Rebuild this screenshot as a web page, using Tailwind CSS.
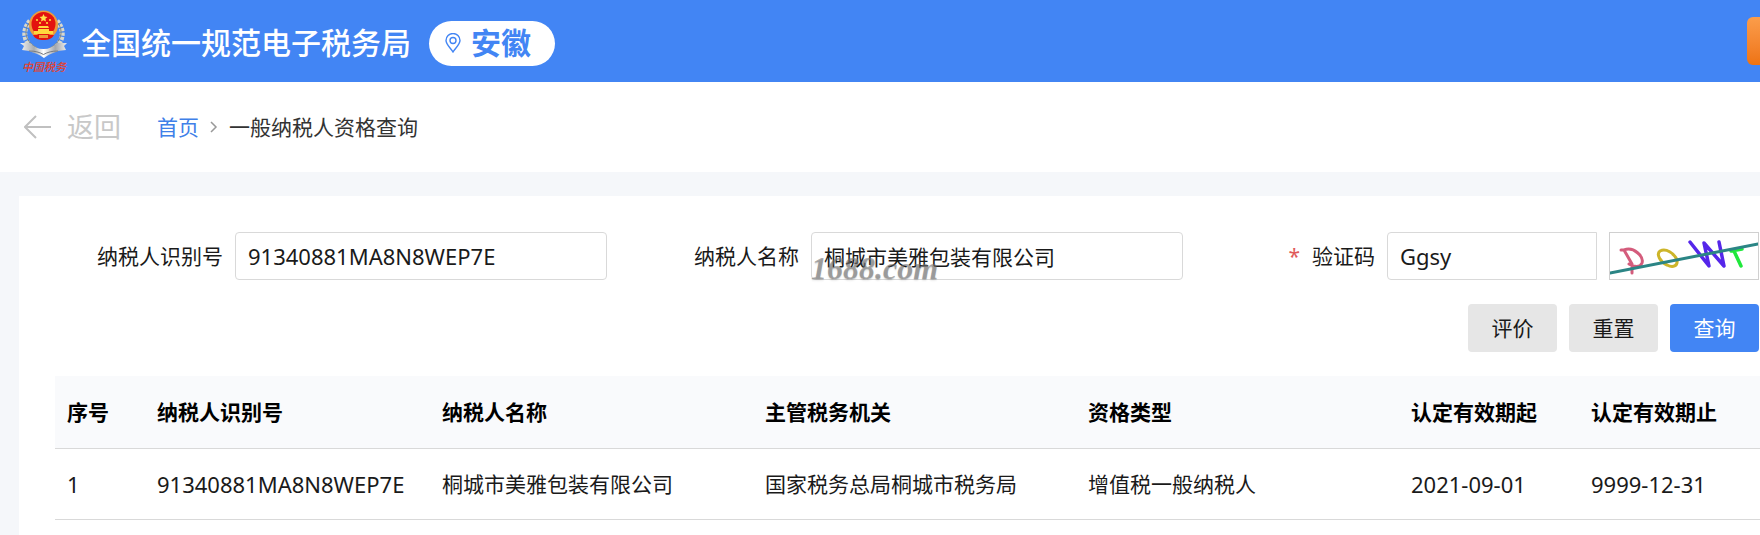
<!DOCTYPE html>
<html lang="zh-CN">
<head>
<meta charset="utf-8">
<title>一般纳税人资格查询</title>
<script src="https://cdn.jsdelivr.net/npm/@tailwindcss/browser@4"></script>
</head>
<body class="min-h-screen flex flex-col bg-[#f5f7fa] text-[21px] leading-8 text-[#1a1a1a] font-['Noto_Sans','Noto_Sans_CJK_SC',sans-serif] overflow-x-hidden">
<header class="h-[82px] bg-[#4285f4] flex items-center pl-5 pt-1">
  <svg class="w-12 h-16 mb-1 shrink-0" viewBox="0 0 48 64" role="img" aria-label="中国税务">
    <defs>
      <linearGradient id="ribbon" x1="0" x2="1" y1="0" y2="0">
        <stop offset="0" stop-color="#f4f4f4"/><stop offset=".3" stop-color="#a9acb0"/><stop offset=".5" stop-color="#fff"/><stop offset=".75" stop-color="#a4a7ac"/><stop offset="1" stop-color="#eee"/>
      </linearGradient>
    </defs>
    <g fill="none" stroke="#d9d8cd" stroke-width="5" stroke-dasharray="3 1.3">
      <path d="M10 12C1 22 4 35 16 41"/><path d="M37 12c9 10 6 23-6 29"/>
    </g>
    <g fill="none" stroke="#7f857f" stroke-width="1">
      <path d="M9 14C3 23 6 33 17 39"/><path d="M38 14c6 9 3 19-8 25"/>
    </g>
    <circle cx="23.500" cy="16" r="14.500" fill="#ee9a3a"/>
    <circle cx="23.500" cy="15" r="12" fill="#e3120f"/>
    <path d="M23.500 5l1.200 2.600 2.800.3-2.100 1.900.6 2.800-2.500-1.400-2.500 1.400.6-2.800-2.100-1.900 2.800-.3z" fill="#ffe14a"/>
    <g fill="#ffd83d"><circle cx="17" cy="11" r="1.100"/><circle cx="20" cy="14" r="1.100"/><circle cx="27" cy="14" r="1.100"/><circle cx="30" cy="11" r="1.100"/>
    <path d="M19 17h9l1 2H18zM18 20h11v2H18zM14 22h19v3H14z"/></g>
    <path d="M13 26h21c-2 4-6 5-10.500 5S15 30 13 26z" fill="#e3120f"/>
    <path d="M19 26h9v3h-9z" fill="#ee9a3a"/>
    <path d="M0 34l10 0c4 4 8 6 13.500 6S33 38 37 34l10 0-3 3 2 4-8 1c-4 2-9 3-14 7-5-4-10-5-15-7l-7-1 2-4z" fill="url(#ribbon)"/>
    <path d="M9 42c6 0 10 1 14.500 3.500C28 43 32 42 38 42" fill="none" stroke="#777b82" stroke-width="1"/>
    <text x="24" y="62" text-anchor="middle" font-family="'Noto Sans CJK SC',sans-serif" font-size="11" font-style="italic" font-weight="500" fill="#e5402b">中国税务</text>
  </svg>
  <h1 class="ml-[13px] text-[30px] leading-10 font-medium text-white whitespace-nowrap">全国统一规范电子税务局</h1>
  <button type="button" class="ml-[18px] h-[45px] px-4 rounded-full bg-white text-[#4285f4] flex items-center whitespace-nowrap">
    <svg class="w-4 h-5 mr-[10px] shrink-0" viewBox="0 0 16 20" fill="none" stroke="#4285f4" stroke-width="1.400" aria-hidden="true"><path d="M8 19C6 15.500 1 11.500 1 7.500a7 7 0 0 1 14 0c0 4-5 8-7 11.500z"/><circle cx="8" cy="7.500" r="3"/></svg>
    <span class="text-[30px] leading-10 font-bold pr-2">安徽</span>
  </button>
  <button type="button" aria-label="更多" class="ml-auto mb-1 w-[13px] h-12 rounded-l-md bg-linear-to-b from-[#fb9d4a] to-[#ee7310] shrink-0"></button>
</header>

<nav class="h-[90px] bg-white flex items-center pl-6 whitespace-nowrap" aria-label="面包屑">
  <a href="#" class="flex items-center text-[27px] text-[#c8c8c8]">
    <svg class="w-7 h-6 mr-[15px]" viewBox="0 0 28 24" fill="none" stroke="#c0c0c0" stroke-width="2" aria-hidden="true"><path d="M27 12H1M12 1L1 12l11 11"/></svg>返回</a>
  <a href="#" class="ml-9 text-[#3f80e8]">首页</a>
  <svg class="w-2 h-3 mx-[11px]" viewBox="0 0 8 12" fill="none" stroke="#999" stroke-width="1.500" aria-hidden="true"><path d="M1 1l5 5-5 5"/></svg>
  <span class="text-[#333]">一般纳税人资格查询</span>
</nav>

<main class="mt-6 ml-[19px] pl-9 pt-9 pb-4 bg-white grow">
  <form class="pr-px" onsubmit="return false">
    <div class="grid grid-cols-3 gap-6">
      <div class="flex items-center">
        <label for="tax-id" class="w-[180px] shrink-0 pr-3 text-right">纳税人识别号</label>
        <input id="tax-id" value="91340881MA8N8WEP7E" class="h-12 min-w-0 grow border border-[#d9d9d9] rounded px-3 text-[22px]">
      </div>
      <div class="flex items-center">
        <label for="tax-name" class="w-[180px] shrink-0 pr-3 text-right">纳税人名称</label>
        <div class="relative grow flex">
          <input id="tax-name" value="桐城市美雅包装有限公司" class="h-12 min-w-0 grow border border-[#d9d9d9] rounded px-3">
          <span class="absolute left-0 -bottom-1 leading-8 text-[32px] italic font-bold text-[#777]/60 font-['Liberation_Serif',serif] text-shadow-sm pointer-events-none">1688.com</span>
        </div>
      </div>
      <div class="flex items-center">
        <label for="captcha" class="w-[180px] shrink-0 pr-3 text-right"><span class="text-[#e05a5a] mr-3">*</span>验证码</label>
        <input id="captcha" value="Ggsy" class="h-12 min-w-0 grow border border-[#d9d9d9] rounded-l px-3 text-[22px]">
        <svg class="ml-3 w-[150px] h-12 shrink-0 border border-[#d0d0d0]" viewBox="0 0 148 46" fill="none" stroke-linecap="round" stroke-linejoin="round" role="img" aria-label="验证码图片">
          <path d="M11 17L14 17L22 31L22 40M14 17C24 13 34 24 32 30C30 35 24 34 19 31" stroke="#d45c7c" stroke-width="3"/>
          <path d="M50 18c6-3 14 2 17 9 1 6-4 8-10 5-7-3-11-11-7-14z" stroke="#cdb52a" stroke-width="3"/>
          <path d="M80 9L99 33L94 10L114 33L109 9" stroke="#5526ea" stroke-width="3.500"/>
          <path d="M121 18L132 16M124 18L131 33" stroke="#20e83c" stroke-width="3.500"/>
          <path d="M0 40L148 11" stroke="#2b8585" stroke-width="3"/>
        </svg>
      </div>
    </div>
    <div class="mt-6 flex justify-end gap-3">
      <button type="button" class="h-12 w-[89px] rounded bg-[#e6e6e6]">评价</button>
      <button type="reset" class="h-12 w-[89px] rounded bg-[#e6e6e6]">重置</button>
      <button type="submit" class="h-12 w-[89px] rounded bg-[#4285f4] text-white">查询</button>
    </div>
  </form>

  <table class="mt-6 w-full table-fixed border-collapse text-left whitespace-nowrap">
    <colgroup><col class="w-[90px]"><col class="w-[285px]"><col><col><col><col class="w-[180px]"><col class="w-[181px]"></colgroup>
    <thead class="bg-[#f9fafc] text-black">
      <tr class="h-[72px] border-b border-[#d9d9d9]">
        <th scope="col" class="px-3">序号</th><th scope="col" class="px-3">纳税人识别号</th><th scope="col" class="px-3">纳税人名称</th><th scope="col" class="px-3">主管税务机关</th><th scope="col" class="px-3">资格类型</th><th scope="col" class="px-3">认定有效期起</th><th scope="col" class="px-3">认定有效期止</th>
      </tr>
    </thead>
    <tbody>
      <tr class="h-[71px] border-b border-[#d9d9d9]">
        <td class="px-3 text-[22px]">1</td><td class="px-3 text-[22px]">91340881MA8N8WEP7E</td><td class="px-3">桐城市美雅包装有限公司</td><td class="px-3">国家税务总局桐城市税务局</td><td class="px-3">增值税一般纳税人</td><td class="px-3 text-[22px]">2021-09-01</td><td class="px-3 text-[22px]">9999-12-31</td>
      </tr>
    </tbody>
  </table>
</main>
</body>
</html>
